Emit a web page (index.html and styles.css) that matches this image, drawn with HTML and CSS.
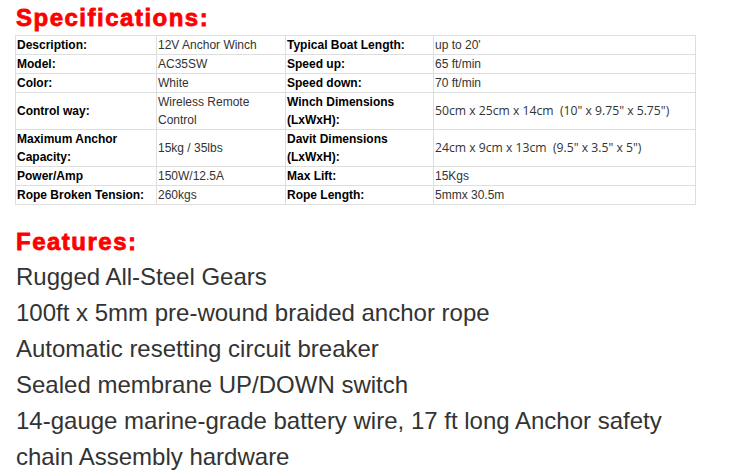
FILE: index.html
```html
<!DOCTYPE html>
<html>
<head>
<meta charset="utf-8">
<link rel="stylesheet" href="styles.css">
</head>
<body>
<div class="page">
  <h2 class="title">Specifications:</h2>
  <table class="specs">
    <colgroup>
      <col class="c1"><col class="c2"><col class="c3"><col class="c4">
    </colgroup>
    <tr class="row1">
      <th>Description:</th><td>12V Anchor Winch</td>
      <th>Typical Boat Length:</th><td>up to 20'</td>
    </tr>
    <tr class="row1">
      <th>Model:</th><td>AC35SW</td>
      <th>Speed up:</th><td>65 ft/min</td>
    </tr>
    <tr class="row1">
      <th>Color:</th><td>White</td>
      <th>Speed down:</th><td>70 ft/min</td>
    </tr>
    <tr>
      <th>Control way:</th><td>Wireless Remote Control</td>
      <th>Winch Dimensions (LxWxH):</th><td class="dim">50cm x 25cm x 14cm&nbsp; (10" x 9.75" x 5.75")</td>
    </tr>
    <tr>
      <th>Maximum Anchor Capacity:</th><td>15kg / 35lbs</td>
      <th>Davit Dimensions (LxWxH):</th><td class="dim">24cm x 9cm x 13cm&nbsp; (9.5" x 3.5" x 5")</td>
    </tr>
    <tr class="row1">
      <th>Power/Amp</th><td>150W/12.5A</td>
      <th>Max Lift:</th><td>15Kgs</td>
    </tr>
    <tr class="row1">
      <th>Rope Broken Tension:</th><td>260kgs</td>
      <th>Rope Length:</th><td>5mmx 30.5m</td>
    </tr>
  </table>
  <h2 class="title features-title">Features:</h2>
  <ul class="features">
    <li>Rugged All-Steel Gears</li>
    <li>100ft x 5mm pre-wound braided anchor rope</li>
    <li>Automatic resetting circuit breaker</li>
    <li>Sealed membrane UP/DOWN switch</li>
    <li>14-gauge marine-grade battery wire, 17 ft long Anchor safety chain Assembly hardware</li>
  </ul>
</div>
</body>
</html>
```

FILE: styles.css
```css
html, body {
  margin: 0;
  padding: 0;
  background: #fff;
}
.page {
  padding: 2px 0 0 15px;
  width: 700px;
  font-family: "Liberation Sans", Arial, sans-serif;
}
.title {
  margin: 0 0 1px 1px;
  font-size: 24px;
  line-height: 32px;
  font-weight: bold;
  color: #ff0000;
  letter-spacing: 1.5px;
  -webkit-text-stroke: 0.8px #ff0000;
}
.specs {
  border-collapse: collapse;
  table-layout: fixed;
  width: 681px;
  font-size: 12px;
  line-height: 18px;
}
.c1 { width: 141px; }
.c2 { width: 129px; }
.c3 { width: 148px; }
.c4 { width: 262px; }
.specs th, .specs td {
  border: 1px solid #dedede;
  padding: 0 1px;
  text-align: left;
  vertical-align: middle;
}
.specs th {
  font-weight: bold;
  color: #000;
}
.specs td {
  font-weight: normal;
  color: #333;
}
.specs td.dim {
  font-family: "Open Sans", "Liberation Sans", sans-serif;
  font-size: 12.2px;
}
.row1 th, .row1 td {
  height: 18px;
}
.features-title {
  margin-top: 21px;
  margin-bottom: 1px;
}
.features {
  list-style: none;
  margin: 0;
  padding: 0 0 0 1px;
  width: 680px;
  font-size: 24px;
  line-height: 36px;
  color: #333;
}
```
